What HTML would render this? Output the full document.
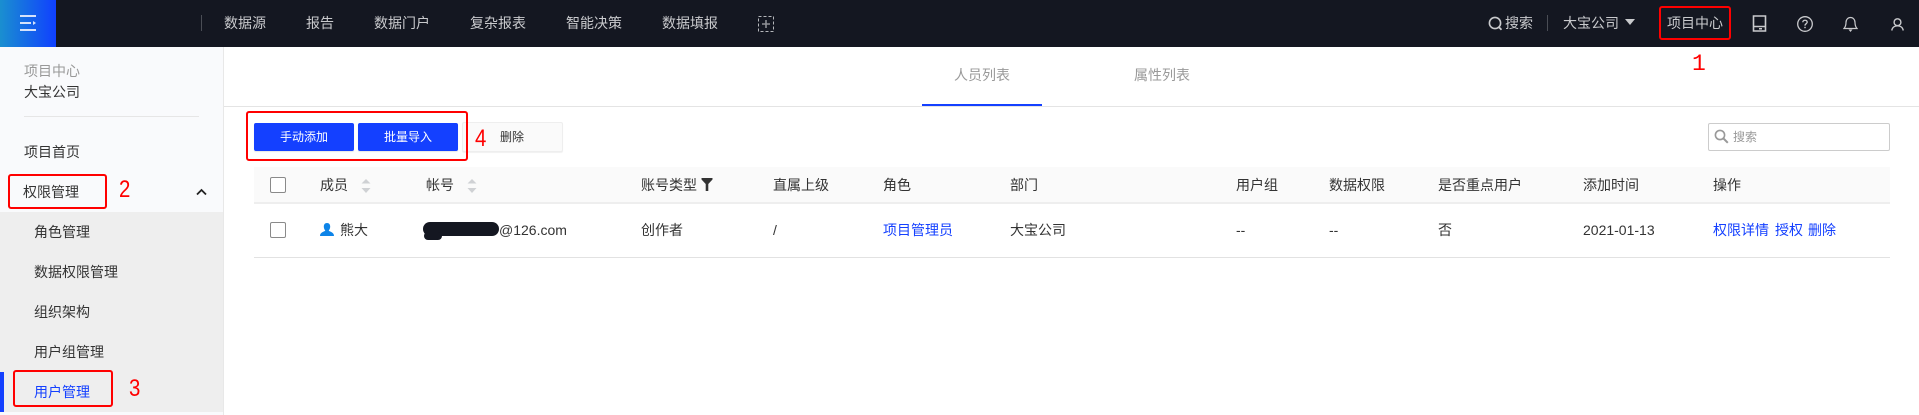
<!DOCTYPE html>
<html lang="zh-CN">
<head>
<meta charset="utf-8">
<title>用户管理</title>
<style>
html,body{margin:0;padding:0;background:#fff}
body{position:relative;width:1919px;height:415px;overflow:hidden;font-family:"Liberation Sans","Noto Sans CJK SC",sans-serif;font-size:14px;color:#333}
.b{position:absolute}
.t{position:absolute;white-space:nowrap;line-height:20px;height:20px}
.n{color:#c9cacd}
.l{color:#1440ff}
.s{font-size:12px}
.red{position:absolute;border:2px solid #f00;border-radius:3px;box-sizing:border-box}
.num{position:absolute;color:#f00;font-family:"Liberation Sans",sans-serif;font-size:24px;line-height:24px;height:24px;white-space:nowrap;transform:scaleX(.85);transform-origin:left center}
.cb{position:absolute;width:16px;height:16px;box-sizing:border-box;border:1px solid #8a8a8a;border-radius:2px;background:#fff}
.btn{position:absolute;top:123px;height:28px;width:100px;background:#1440ff;border-radius:2px;color:#fff;font-size:12px;line-height:28px;text-align:center;box-shadow:0 1px 1px rgba(0,0,0,.1)}
svg{position:absolute;display:block}
</style>
</head>
<body>
<!-- top bar -->
<div class="b" style="left:0;top:0;width:1919px;height:47px;background:#141721"></div>
<div class="b" style="left:0;top:0;width:56px;height:47px;background:linear-gradient(90deg,#1a8fd0,#1040ff)"></div>
<svg style="left:0;top:0" width="56" height="47"><g fill="#d5e2fb"><rect x="20" y="15" width="16" height="2"/><rect x="20" y="22" width="11" height="2"/><rect x="20" y="29" width="16" height="2"/><path d="M33 21l3 2-3 2z"/></g></svg>
<div class="b" style="left:201px;top:15px;width:1px;height:16px;background:#4a4d55"></div>
<span class="t n" style="left:224px;top:13px">数据源</span>
<span class="t n" style="left:306px;top:13px">报告</span>
<span class="t n" style="left:374px;top:13px">数据门户</span>
<span class="t n" style="left:470px;top:13px">复杂报表</span>
<span class="t n" style="left:566px;top:13px">智能决策</span>
<span class="t n" style="left:662px;top:13px">数据填报</span>
<svg style="left:758px;top:16px" width="16" height="16"><rect x=".5" y=".5" width="15" height="15" fill="none" stroke="#b5b7bb" stroke-dasharray="3 2"/><path d="M4 8h8M8 4v8" stroke="#8e9096" stroke-width="1.6"/></svg>

<svg style="left:1488px;top:16px" width="15" height="15"><circle cx="7" cy="7" r="5.6" fill="none" stroke="#c9cacd" stroke-width="1.6"/><path d="M10.5 10.8l3 3" stroke="#c9cacd" stroke-width="1.8"/></svg>
<span class="t n" style="left:1505px;top:13px">搜索</span>
<div class="b" style="left:1547px;top:15px;width:1px;height:16px;background:#4a4d55"></div>
<span class="t n" style="left:1563px;top:13px">大宝公司</span>
<svg style="left:1625px;top:19px" width="10" height="6"><path d="M0 0h10L5 6z" fill="#c9cacd"/></svg>
<span class="t n" style="left:1667px;top:13px">项目中心</span>
<div class="red" style="left:1659px;top:6px;width:72px;height:34px"></div>
<span class="num" style="left:1692px;top:50px;font-family:'Liberation Mono',monospace;font-size:23px;top:52px;transform:none">1</span>

<svg style="left:1752px;top:15px" width="15" height="17"><path d="M1.5 1h12v15h-12zM1.5 11.5h12" fill="none" stroke="#c9cacd" stroke-width="1.6"/><rect x="7" y="13" width="3" height="1.5" fill="#c9cacd"/></svg>
<svg style="left:1797px;top:16px" width="16" height="16"><circle cx="8" cy="8" r="7.3" fill="none" stroke="#c9cacd" stroke-width="1.3"/><path d="M5.8 6.3C5.8 3.6 10.2 3.6 10.2 6.1 10.2 7.7 8 7.7 8 9.6" fill="none" stroke="#c9cacd" stroke-width="1.3"/><rect x="7.3" y="10.8" width="1.4" height="1.4" fill="#c9cacd"/></svg>
<svg style="left:1843px;top:16px" width="15" height="16"><path d="M1 12.5h13C12.2 10.500 12 9 12 6.500 12 3.500 10 1.500 7.500 1.500S3 3.500 3 6.500C3 9 2.800 10.500 1 12.500z" fill="none" stroke="#c9cacd" stroke-width="1.2"/><path d="M5.500 13.500h4L7.500 16z" fill="#c9cacd"/></svg>
<svg style="left:1891px;top:18px" width="13" height="13"><circle cx="6.500" cy="4.200" r="3.400" fill="none" stroke="#c9cacd" stroke-width="1.4"/><path d="M.8 12.500C1.200 9.500 3.500 7.800 6.500 7.800S11.800 9.500 12.200 12.500" fill="none" stroke="#c9cacd" stroke-width="1.4"/></svg>

<!-- sidebar -->
<div class="b" style="left:0;top:47px;width:223px;height:368px;background:#f9fafc;border-right:1px solid #e8e8e8"></div>
<span class="t" style="left:24px;top:61px;color:#999">项目中心</span>
<span class="t" style="left:24px;top:82px">大宝公司</span>
<div class="b" style="left:24px;top:116px;width:175px;height:1px;background:#e6e6e6"></div>
<span class="t" style="left:24px;top:142px">项目首页</span>
<span class="t" style="left:23px;top:182px">权限管理</span>
<div class="red" style="left:8px;top:174px;width:99px;height:35px"></div>
<span class="num" style="left:119px;top:178px">2</span>
<svg style="left:196px;top:188px" width="11" height="8"><path d="M1 6.500l4.500-4.500L10 6.500" fill="none" stroke="#222" stroke-width="1.8"/></svg>
<div class="b" style="left:0;top:212px;width:223px;height:200px;background:#eeeeee"></div>
<div class="b" style="left:0;top:372px;width:4px;height:40px;background:#1440ff"></div>
<span class="t" style="left:34px;top:222px">角色管理</span>
<span class="t" style="left:34px;top:262px">数据权限管理</span>
<span class="t" style="left:34px;top:302px">组织架构</span>
<span class="t" style="left:34px;top:342px">用户组管理</span>
<span class="t l" style="left:34px;top:382px">用户管理</span>
<div class="red" style="left:13px;top:370px;width:100px;height:37px"></div>
<span class="num" style="left:129px;top:377px">3</span>

<!-- tabs -->
<div class="b" style="left:224px;top:106px;width:1695px;height:1px;background:#e4e4e4"></div>
<div class="b" style="left:922px;top:104px;width:120px;height:2px;background:#1440ff"></div>
<span class="t" style="left:954px;top:65px;color:#999">人员列表</span>
<span class="t" style="left:1134px;top:65px;color:#999">属性列表</span>

<!-- toolbar -->
<div class="btn" style="left:254px">手动添加</div>
<div class="btn" style="left:358px">批量导入</div>
<div class="b" style="left:462px;top:122px;width:101px;height:30px;box-sizing:border-box;background:#fafafa;border:1px solid #eee;border-radius:2px;box-shadow:0 1px 1px rgba(0,0,0,.06)"></div>
<span class="t s" style="left:500px;top:127px">删除</span>
<div class="red" style="left:246px;top:111px;width:222px;height:50px"></div>
<span class="num" style="left:475px;top:127px">4</span>
<div class="b" style="left:1708px;top:123px;width:182px;height:28px;box-sizing:border-box;border:1px solid #ccc;border-radius:2px"></div>
<svg style="left:1714px;top:129px" width="15" height="15"><circle cx="6" cy="6" r="4.600" fill="none" stroke="#999" stroke-width="1.6"/><path d="M9.500 9.500l4.300 4.300" stroke="#999" stroke-width="2"/></svg>
<span class="t s" style="left:1733px;top:127px;color:#999">搜索</span>

<!-- table -->
<div class="b" style="left:254px;top:167px;width:1636px;height:35px;background:#fafafa"></div>
<div class="b" style="left:254px;top:202px;width:1636px;height:2px;background:#eeeeee"></div>
<div class="b" style="left:254px;top:257px;width:1636px;height:1px;background:#e2e2e2"></div>
<div class="cb" style="left:270px;top:177px"></div>
<span class="t" style="left:320px;top:175px">成员</span>
<svg style="left:361px;top:179px" width="10" height="14"><path d="M5 0l4.500 4.500H.5zM.5 9h9L5 14z" fill="#cfd1d4"/></svg>
<span class="t" style="left:426px;top:175px">帐号</span>
<svg style="left:467px;top:179px" width="10" height="14"><path d="M5 0l4.500 4.500H.5zM.5 9h9L5 14z" fill="#cfd1d4"/></svg>
<span class="t" style="left:641px;top:175px">账号类型</span>
<svg style="left:701px;top:178px" width="12" height="13"><path d="M.5 0h11v1.500L7.300 6v7H4.700V6L.5 1.500z" fill="#333"/></svg>
<span class="t" style="left:773px;top:175px">直属上级</span>
<span class="t" style="left:883px;top:175px">角色</span>
<span class="t" style="left:1010px;top:175px">部门</span>
<span class="t" style="left:1236px;top:175px">用户组</span>
<span class="t" style="left:1329px;top:175px">数据权限</span>
<span class="t" style="left:1438px;top:175px">是否重点用户</span>
<span class="t" style="left:1583px;top:175px">添加时间</span>
<span class="t" style="left:1713px;top:175px">操作</span>

<div class="cb" style="left:270px;top:222px"></div>
<svg style="left:320px;top:223px" width="14" height="13"><path d="M7 0C9.200 0 10.200 1.600 10.200 3.600 10.200 5.400 9.400 6.700 8.700 7.500 9.600 8.800 14 9 14 13H0C0 9 4.400 8.800 5.300 7.500 4.600 6.700 3.800 5.400 3.800 3.600 3.800 1.600 4.800 0 7 0z" fill="#0d84e8"/></svg>
<span class="t" style="left:340px;top:220px">熊大</span>
<div class="b" style="left:423px;top:222px;width:76px;height:14px;background:#141721;border-radius:7px"></div>
<div class="b" style="left:424px;top:232px;width:18px;height:8px;background:#141721;border-radius:4px"></div>
<span class="t" style="left:499px;top:220px">@126.com</span>
<span class="t" style="left:641px;top:220px">创作者</span>
<span class="t" style="left:773px;top:220px">/</span>
<span class="t l" style="left:883px;top:220px">项目管理员</span>
<span class="t" style="left:1010px;top:220px">大宝公司</span>
<span class="t" style="left:1236px;top:220px">--</span>
<span class="t" style="left:1329px;top:220px">--</span>
<span class="t" style="left:1438px;top:220px">否</span>
<span class="t" style="left:1583px;top:220px">2021-01-13</span>
<span class="t l" style="left:1713px;top:220px">权限详情</span>
<span class="t l" style="left:1775px;top:220px">授权</span>
<span class="t l" style="left:1808px;top:220px">删除</span>
</body>
</html>
